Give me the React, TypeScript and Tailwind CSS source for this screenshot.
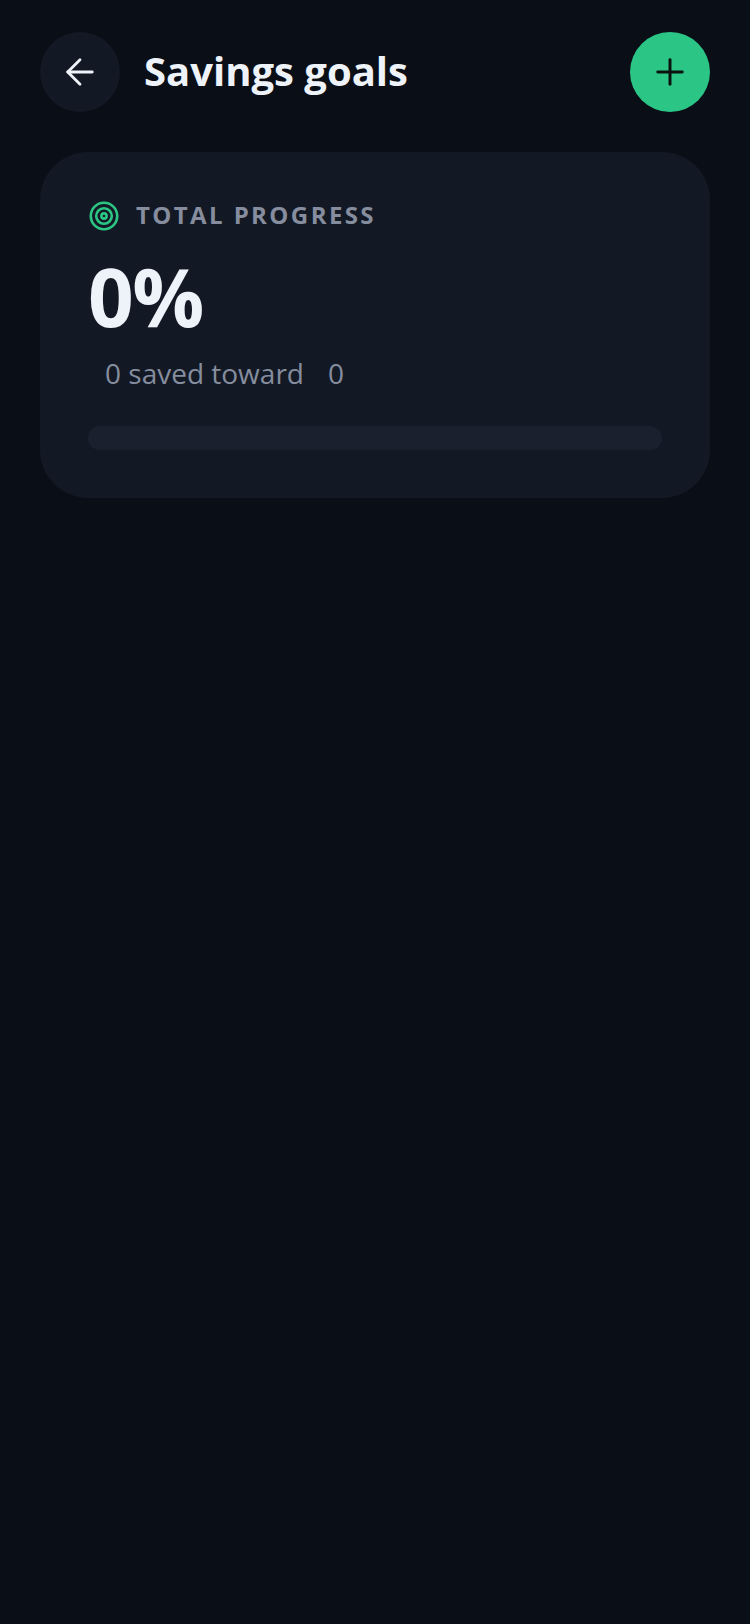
import { ArrowLeft, Plus } from 'lucide-react';

const font = "font-['Open_Sans',sans-serif]";

// concentric rings next to the card heading
const TargetIcon = () => (
  <svg width="32" height="32" viewBox="0 0 32 32" fill="none" stroke="#2bc686" strokeWidth="2.6">
    <circle cx="16" cy="16" r="13.2" />
    <circle cx="16" cy="16" r="7.8" />
    <circle cx="16" cy="16" r="2.6" />
  </svg>
);

const App = () => {
  return (
    <div className={`${font} min-h-[1624px] w-[750px] bg-[#0a0e16] px-10 pt-8`}>
      <header className="flex items-center justify-between">
        <div className="flex items-center gap-6">
          <button className="flex h-20 w-20 items-center justify-center rounded-full bg-[#131924]">
            <ArrowLeft size={42} strokeWidth={1.6} color="#eef2f9" />
          </button>
          <h1 className="-mt-0.5 text-[40px] font-bold leading-[56px] text-[#eef2f9]">Savings goals</h1>
        </div>
        <button className="flex h-20 w-20 items-center justify-center rounded-full bg-[#2bc686]">
          <Plus size={42} strokeWidth={1.7} color="#0a130f" />
        </button>
      </header>

      <section className="mt-10 h-[346px] rounded-[48px] bg-[#131924] p-12">
        <div className="flex h-[32px] items-center gap-4">
          <TargetIcon />
          <span className="-mt-0.5 text-[24px] font-bold uppercase tracking-[2.4px] text-[#858d9e]">Total progress</span>
        </div>
        <div className="mt-4 text-[80px] font-bold leading-[96px] tracking-[-1.6px] text-[#eef2f9]">0%</div>
        <p className="mt-[9px] flex h-[40px] items-center pl-[17px] text-[28px] text-[#858d9e]">
          <span>0 saved toward</span>
          <span className="ml-6">0</span>
        </p>
        <div className="mt-[33px] h-6 rounded-full bg-[#1a202e]" />
      </section>
    </div>
  );
};

export default App;
